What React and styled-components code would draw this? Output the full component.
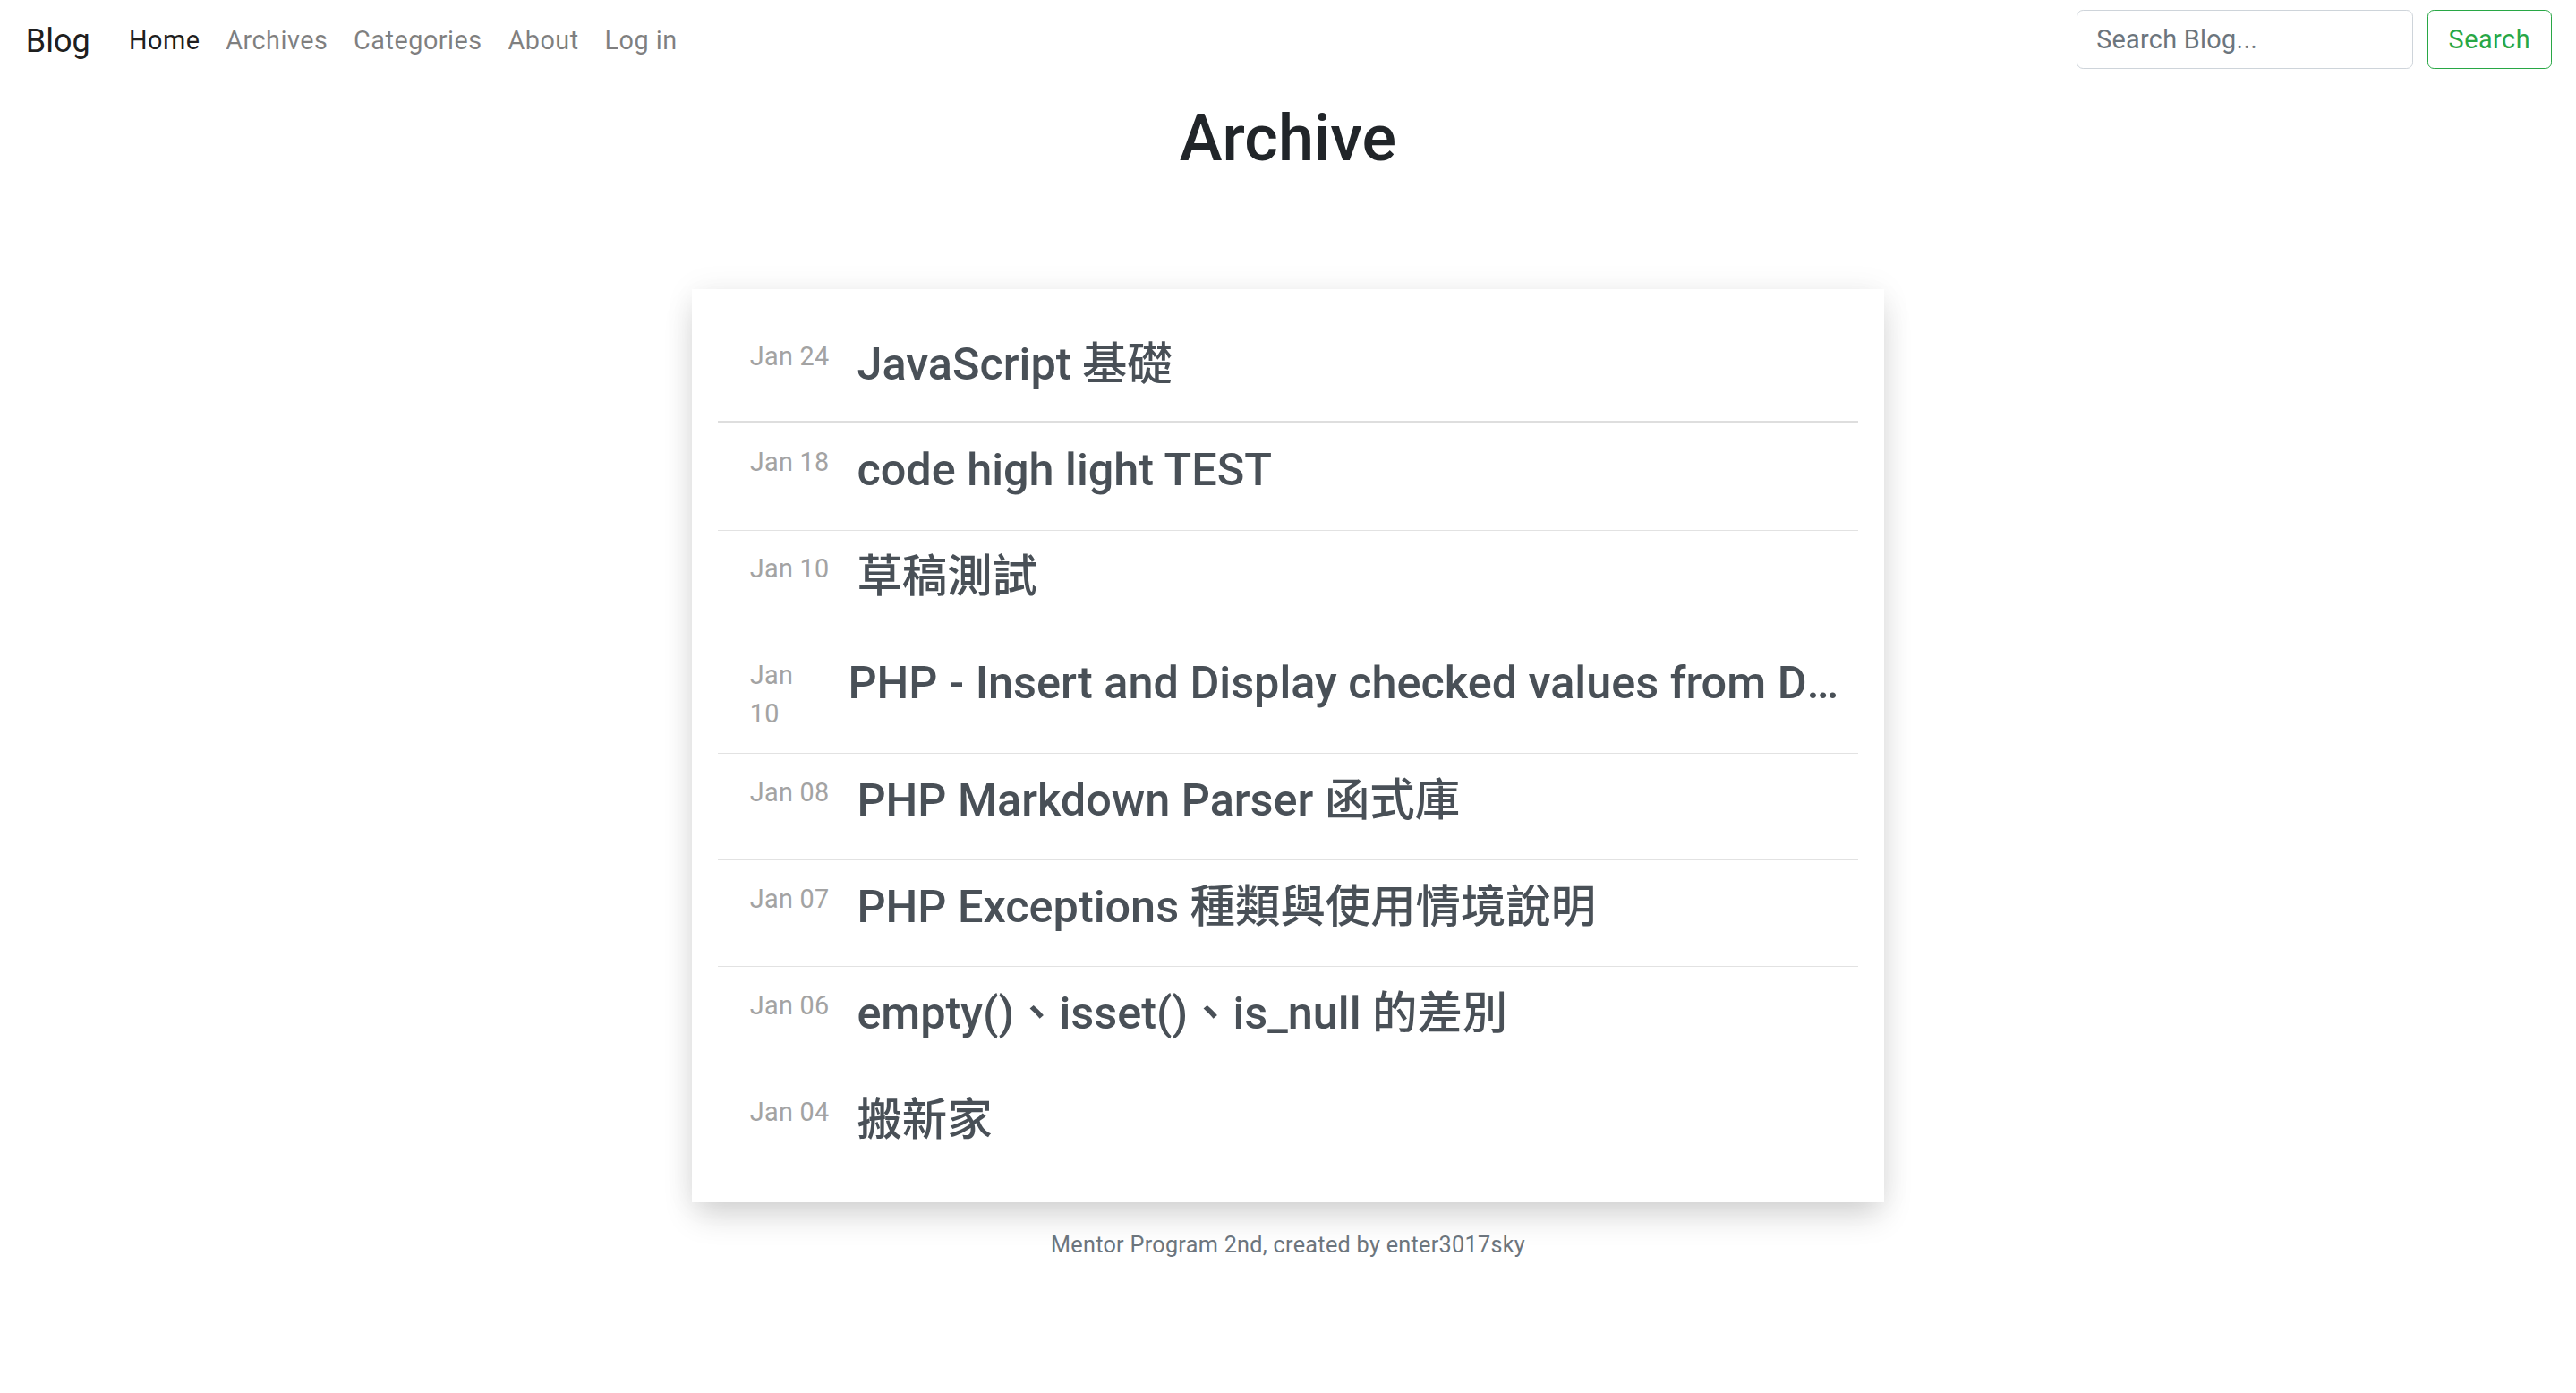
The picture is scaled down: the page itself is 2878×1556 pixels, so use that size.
import React from "react";
import styled, { createGlobalStyle } from "styled-components";

const Global = createGlobalStyle`
  html, body { margin: 0; padding: 0; background: #fff; }
  body {
    font-family: Roboto, "Liberation Sans", "Noto Sans CJK TC", sans-serif;
    color: #212529;
  }
  * { box-sizing: border-box; }
`;

const Navbar = styled.nav`
  display: flex;
  align-items: center;
  padding: 11px 27px 14px 28.8px;
`;

const Brand = styled.a`
  padding-top: 4px;
  font-size: 36px;
  line-height: 1.5;
  color: rgba(0, 0, 0, 0.9);
  text-decoration: none;
  margin-right: 28.8px;
`;

const NavList = styled.ul`
  display: flex;
  list-style: none;
  margin: 0;
  padding: 4px 0 0;
`;

const NavLink = styled.a`
  display: block;
  padding: 0 14.4px;
  font-size: 28.8px;
  line-height: 1.5;
  letter-spacing: 0.5px;
  text-decoration: none;
  color: ${(p) => (p.$active ? "rgba(0,0,0,0.9)" : "rgba(0,0,0,0.5)")};
`;

const SearchForm = styled.form`
  display: flex;
  align-items: center;
  gap: 16px;
  margin-left: auto;
`;

const SearchInput = styled.input`
  width: 376px;
  height: 66px;
  padding: 0 21.6px;
  font-family: Roboto, "Liberation Sans", sans-serif;
  font-size: 28.8px;
  letter-spacing: 0.3px;
  color: #495057;
  border: 1.8px solid #ced4da;
  border-radius: 7.2px;
  outline: none;
  &::placeholder { color: #6c757d; }
`;

const SearchButton = styled.button`
  height: 66px;
  padding: 0 23px;
  font-family: Roboto, "Liberation Sans", sans-serif;
  font-size: 28.8px;
  letter-spacing: 0.5px;
  color: #28a745;
  background: transparent;
  border: 1.8px solid #28a745;
  border-radius: 7.2px;
`;

const Heading = styled.h1`
  margin: 21px 0 0;
  text-align: center;
  font-size: 72px;
  font-weight: 500;
  line-height: 1.2;
  color: #212529;
`;

const Card = styled.section`
  width: 1332px;
  margin: 125px auto 0;
  padding: 32px 28.8px 26px;
  background: #fff;
  box-shadow: 0 18px 34px -4px rgba(0, 0, 0, 0.16), 0 0 34px rgba(0, 0, 0, 0.06);
`;

const Row = styled.article`
  display: flex;
  align-items: flex-start;
  gap: 28.8px;
  padding: 21.6px 18px ${(p) => (p.$first ? "18.6px" : "21.6px")} 36px;
  border-bottom: ${(p) => (p.$last ? "none" : p.$first ? "3.6px solid #dedede" : "1.8px solid #e2e2e2")};
`;

const DateLabel = styled.time`
  flex: 0 1 auto;
  min-width: 76px;
  font-size: 28.8px;
  line-height: 1.5;
  letter-spacing: 0.3px;
  color: #a3a3a3;
`;

const Title = styled.h3`
  flex: 0 1 auto;
  min-width: 0;
  margin: 0 0 14.4px 2px;
  font-size: 50.4px;
  font-weight: 500;
  line-height: 1.2;
  color: #495057;
  white-space: nowrap;
  overflow: hidden;
  text-overflow: ellipsis;
  font-family: Roboto, "Noto Sans CJK TC", sans-serif;
`;

const Footer = styled.footer`
  margin-top: 29px;
  text-align: center;
  font-size: 25.2px;
  line-height: 1.5;
  letter-spacing: 0.3px;
  color: #6c757d;
`;

const posts = [
  { date: "Jan 24", title: "JavaScript 基礎" },
  { date: "Jan 18", title: "code high light TEST" },
  { date: "Jan 10", title: "草稿測試" },
  { date: "Jan 10", title: "PHP - Insert and Display checked values from Database" },
  { date: "Jan 08", title: "PHP Markdown Parser 函式庫" },
  { date: "Jan 07", title: "PHP Exceptions 種類與使用情境說明" },
  { date: "Jan 06", title: "empty()、isset()、is_null 的差別" },
  { date: "Jan 04", title: "搬新家" },
];

export default function App() {
  return (
    <>
      <Global />
      <Navbar>
        <Brand href="#">Blog</Brand>
        <NavList>
          <li><NavLink $active href="#">Home</NavLink></li>
          <li><NavLink href="#">Archives</NavLink></li>
          <li><NavLink href="#">Categories</NavLink></li>
          <li><NavLink href="#">About</NavLink></li>
          <li><NavLink href="#">Log in</NavLink></li>
        </NavList>
        <SearchForm onSubmit={(e) => e.preventDefault()}>
          <SearchInput placeholder="Search Blog..." />
          <SearchButton type="submit">Search</SearchButton>
        </SearchForm>
      </Navbar>
      <Heading>Archive</Heading>
      <Card>
        {posts.map((p, i) => (
          <Row key={i} $first={i === 0} $last={i === posts.length - 1}>
            <DateLabel>{p.date}</DateLabel>
            <Title>{p.title}</Title>
          </Row>
        ))}
      </Card>
      <Footer>Mentor Program 2nd, created by enter3017sky</Footer>
    </>
  );
}
